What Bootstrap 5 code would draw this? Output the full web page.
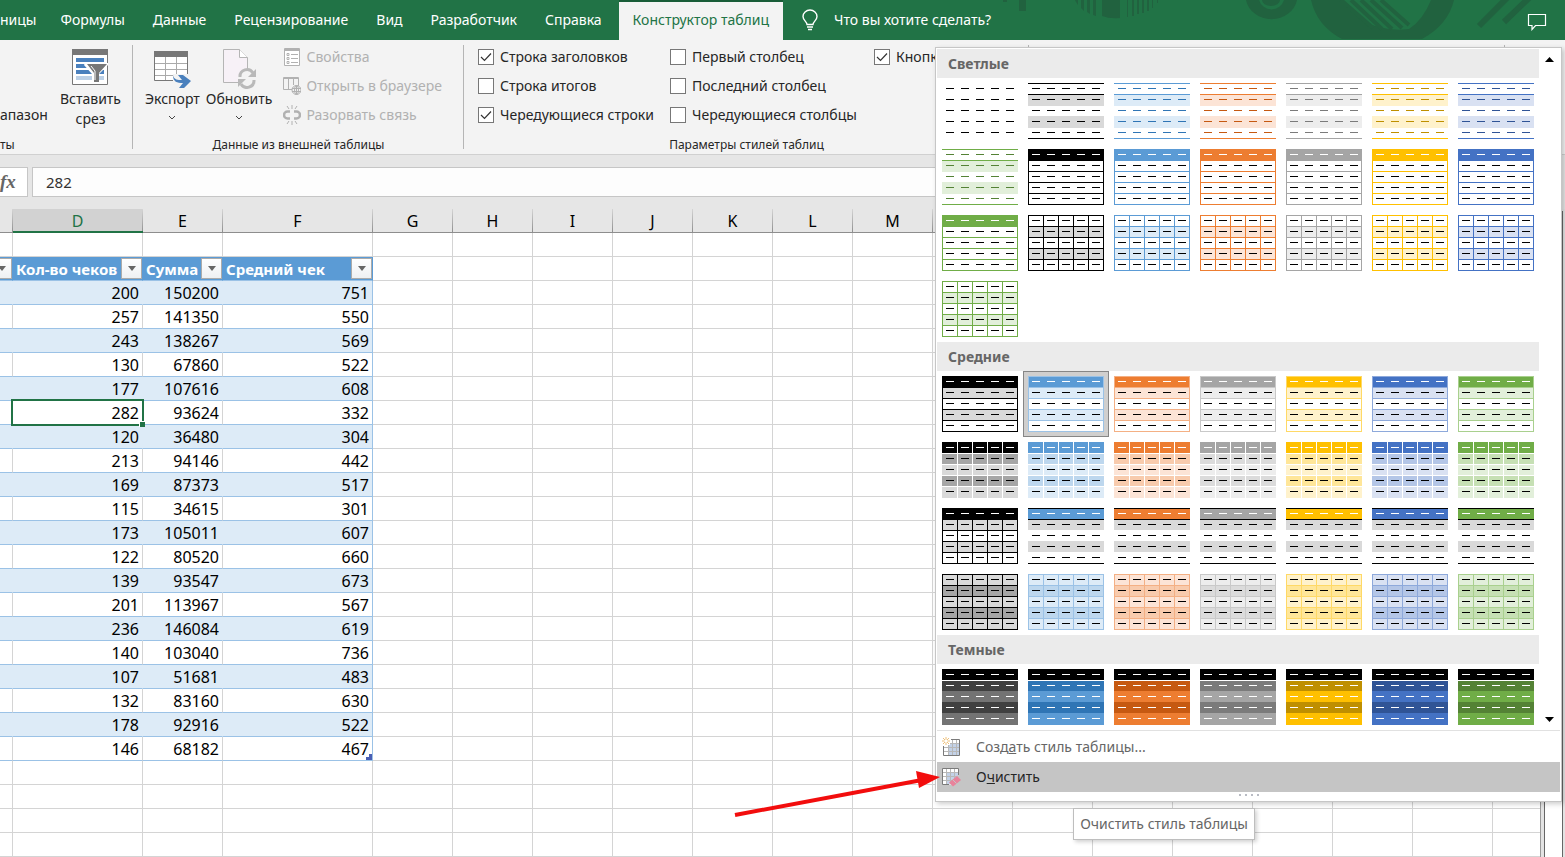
<!DOCTYPE html>
<html lang="ru">
<head>
<meta charset="utf-8">
<meta name="viewport" content="width=device-width, initial-scale=1">
<title>Конструктор таблиц</title>
<link href="https://cdn.jsdelivr.net/npm/bootstrap@5.3.0/dist/css/bootstrap.min.css" rel="stylesheet">
<style>
  body { font-family: "Noto Sans", "Open Sans", sans-serif; font-size: 14px; line-height: 20px; color: #262626; background: #e6e6e6; }
  button { color: inherit; }
  .app { min-height: 100vh; overflow: hidden; }

  /* Title tabs */
  .tabbar { height: 40px; background: #217346; color: #fff; }
  .tabbar .nav-link { color: #fff; padding: 10px 14px; line-height: 20px; border-radius: 0; white-space: nowrap; }
  .tabbar .nav-link.cut { padding: 10px 10px 10px 0; }
  .tabbar .nav-link.active { margin: 2px 3px 0; padding: 8px 14px 10px; background: #f3f3f3; color: #217346; box-shadow: 0 -2px #185c37; }
  .tabbar .deco { top: 0; right: 0; }
  .ask { gap: 16px; padding-left: 16px; white-space: nowrap; }
  .note { margin-right: 18px; }

  /* Ribbon */
  .ribbon { height: 115px; background: #f3f3f3; border-bottom: 1px solid #d0d0d0; }
  .group { padding-top: 5px; position: relative; flex: none; }
  .group::after { content: ""; position: absolute; right: 0; top: 5px; bottom: 5px; width: 1px; background: #b5b5b5; }
  .g-tools { width: 133px; } .g-data { width: 331px; } .g-opts { width: 565px; } .g-styles { width: 476px; }
  .group-name { font-size: 12px; line-height: 16px; color: #262626; height: 17px; white-space: nowrap; }
  .bigbtn { border: 0; background: none; padding: 2px 0 0; text-align: center; white-space: nowrap; }
  .bigbtn svg { display: block; margin: 0 auto; }
  .bigbtns { gap: 6px; padding-left: 12px; }
  .smallbtn { border: 0; background: none; padding: 0; height: 29px; gap: 5px; color: #b1b1b1; white-space: nowrap; }
  .smalls { padding-left: 11px; }
  .stack { margin-top: -3px; }
  .opt { height: 29px; gap: 6px; white-space: nowrap; }
  .opt .form-check-input { width: 16px; height: 16px; margin: 0; border: 1px solid #777; border-radius: 0; background-color: #fff; flex: none; }
  .opt .form-check-input:checked { background-color: #fff; border-color: #777; background-size: 16px 16px;
    background-image: url("data:image/svg+xml,%3csvg xmlns='http://www.w3.org/2000/svg' viewBox='0 0 16 16'%3e%3cpath d='M3 8l3.500 3.500L13 4.500' fill='none' stroke='%23333' stroke-width='1.200'/%3e%3c/svg%3e"); }
  .optgrid { display: grid; grid-template-columns: 192px 204px auto; padding-left: 14px; }

  /* Formula bar */
  .formula { padding: 12px 6px 12px 0; gap: 4px; }
  .fx { width: 28px; height: 30px; background: #fff; border: 1px solid #c6c6c6; border-left: 0; font: italic bold 19px/26px "Liberation Serif", serif; color: #666; padding: 0 15px 0 0; text-align: right; }
  .fbox { height: 30px; border: 1px solid #c6c6c6; border-radius: 0; padding: 0 13px; font-size: 15px; color: #333; background: #fdfdfd; }

  /* Sheet */
  .sheet { background: #fff; border-right: 1px solid #999; min-width: 0; }
  .grid { table-layout: fixed; width: 1573px; border-collapse: separate; border-spacing: 0; font-size: 16px; line-height: 20px; color: #000; }
  .grid td, .grid th { height: 24px; padding: 2px 3px 1px; border-right: 1px solid #d4d4d4; border-bottom: 1px solid #d4d4d4; text-align: right; white-space: nowrap; position: relative; }
  .grid thead th { background: #e6e6e6; border-image: linear-gradient(#d8d8d8, #8c8c8c) 1; text-align: center; font-weight: 400; }
  .grid thead th.cur { background: #d2d2d2; color: #217346; }
  .grid thead th.cur::after { content: ""; position: absolute; left: 0; right: -1px; bottom: -1px; height: 2px; background: #217346; }
  .grid .t { border-bottom-color: #9bc2e6; }
  .grid .last { border-right-color: #9bc2e6; }
  .grid .band .t { background: #ddebf7; border-right-color: #ddebf7; }
  .grid .band .last { border-right-color: #9bc2e6; }
  .grid .head .t { background: #5b9bd5; border-right-color: #5b9bd5; color: #fff; font-weight: 700; font-size: 15px; text-align: left; }
  .filter { position: absolute; right: 0; top: 1px; width: 21px; height: 21px; border: 1px solid #ababab; background: linear-gradient(#fff, #eef0f3); padding: 0; display: flex; align-items: center; justify-content: center; }
  .grid .sel { z-index: 1; }
  .sel::before { content: ""; position: absolute; left: -2px; top: -2px; right: -2px; bottom: -2px; border: 2px solid #217346; }
  .sel::after { content: ""; position: absolute; right: -3px; bottom: -3px; width: 6px; height: 6px; background: #217346; border: 1px solid #fff; border-width: 1px 0 0 1px; }
  .corner { position: absolute; right: 0; bottom: 0; }
  .rail { width: 24px; padding: 2px 2px 0 3px; background: #e3e3e3; }
  .thumb { background: #fff; border: 1px solid #666; border-bottom: 0; }

  /* Style gallery */
  .gallery { position: absolute; right: 3px; top: 47px; width: 627px; border: 1px solid #c6c6c6; padding: 1px; background: #fff; box-shadow: 2px 2px 5px rgba(0,0,0,.2); z-index: 5; }
  .cat { height: 29px; padding: 4px 11px; background: #ebebeb; color: #666; font-weight: 700; font-size: 14px; margin: 0; line-height: 21px; }
  .swatches { display: grid; grid-template-columns: repeat(7, 86px); }
  .swatch { border: 0; background: none; padding: 5px; height: 66px; }
  .swatch svg { display: block; shape-rendering: crispEdges; }
  .swatch.on { background: #d0cfce; outline: 1px solid #868686; outline-offset: -1px; }
  .bar { width: 21px; padding: 8px 0; }
  .bar button { border: 0; background: none; padding: 0; line-height: 0; }
  .cmd { border: 0; background: #fff; height: 31px; padding: 0 5px; gap: 15px; color: #666; text-align: left; }
  .cmd.hot { background: #c5c5c5; height: 30px; color: #262626; }
  .cmds { border-top: 1px solid #e1e1e1; }
  .grip { height: 8px; gap: 4px; padding-top: 2px; }
  .grip i { width: 2px; height: 2px; background: #b9bcc4; }
  .hint { position: absolute; right: 310px; top: 808px; border: 1px solid #bebebe; background: #fff; color: #666; padding: 5px 6px; line-height: 20px; box-shadow: 2px 2px 4px rgba(0,0,0,.18); z-index: 6; white-space: nowrap; }
  .pointer { position: absolute; right: 622px; top: 765px; z-index: 7; pointer-events: none; }
</style>
</head>
<body>
<div class="app position-relative d-flex flex-column">

  <header class="tabbar d-flex position-relative">
    <svg class="deco position-absolute" width="565" height="40" fill="#21623f" stroke="none" aria-hidden="true">
      <path d="M19 0h7v11h-7zM3 0h4v2h-4z"/>
      <path d="M75 0h3v5l-2-3zM81 0h3v11l-3-3zM87 0h3v14l-3-2zM93 0h3v16l-3-1zM102 0h18v18q-10 1-18-2zM127 0h1v17h-1zM132 0h2v16h-2zM137 0h2v14h-2zM142 0h2v13h-2zM147 0h2v11h-2zM152 0h1v8h-1zM157 0h1v3h-1z"/>
      <path d="M246 0a26 24 0 0 0 51 0h-13a13 13 0 0 1-25 0zM262 0h18a9 6 0 0 1-18 0z"/>
      <path d="M311 0q6 26 31 39h80q26-14 32-39h-23q-8 20-22 29q-26 3-45-8q-16-10-21-21z"/>
      <path d="M341 0l32 28M351 0l31 29M361 0l31 29M371 0l31 28M381 0l28 25" fill="none" stroke="#21623f" stroke-width="4"/>
      <path d="M479 26L507-2M504 22L530-3" fill="none" stroke="#21623f" stroke-width="6"/>
    </svg>
    <nav class="nav flex-nowrap position-relative">
      <a class="nav-link cut" href="#">ницы</a>
      <a class="nav-link" href="#">Формулы</a>
      <a class="nav-link" href="#">Данные</a>
      <a class="nav-link" href="#">Рецензирование</a>
      <a class="nav-link" href="#">Вид</a>
      <a class="nav-link" href="#">Разработчик</a>
      <a class="nav-link" href="#">Справка</a>
      <a class="nav-link active" href="#" aria-current="page">Конструктор таблиц</a>
    </nav>
    <div class="ask d-flex align-items-center position-relative">
      <svg width="16" height="22" fill="none" stroke="#fff" stroke-width="1.400"><path d="M5 15.500c0-3-4-4-4-8a7 6.500 0 0 1 14 0c0 4-4 5-4 8zM5 18h6M6 20.500h4"/></svg>
      <span>Что вы хотите сделать?</span>
    </div>
    <button class="note btn border-0 p-0 ms-auto position-relative" aria-label="Примечания"><svg width="20" height="18" fill="none" stroke="#fff" stroke-width="1.200"><path d="M1.500 1.500h17v11h-10l-3.500 4v-4h-3.500z"/></svg></button>
  </header>

  <section class="ribbon d-flex">
    <div class="group g-tools d-flex flex-column">
      <div class="d-flex flex-grow-1 justify-content-between pe-2">
        <button class="bigbtn align-self-end pb-2 mb-1">апазон</button>
        <button class="bigbtn align-self-start me-1">
          <svg width="36" height="42" viewBox="0 0 36 42"><path d="M.5 2.500h35v35H.5z" fill="#fff" stroke="#777"/><path d="M0 2h36v6H0z" fill="#777"/><path d="M4 11h28v4H4zM4 17h28v4H4zM4 23h28v4H4z" fill="#4a80bd"/><path d="M4 29h28v4H4z" fill="#bcd0e6"/><path d="M13 16h23v2l-9 9v9h-7v-9l-8-9z" fill="#fff"/><path d="M15 17h20l-8 9v9h-5v-9z" fill="#777"/><path d="M19 19l4 5v9" fill="none" stroke="#fff"/></svg>
          Вставить<br>срез
        </button>
      </div>
      <div class="group-name">ты</div>
    </div>

    <div class="group g-data d-flex flex-column">
      <div class="d-flex flex-grow-1">
        <div class="bigbtns d-flex">
          <button class="bigbtn align-self-start">
            <svg width="38" height="42" viewBox="0 0 38 42"><path d="M1.500 4.500h33v29h-33z" fill="#fff" stroke="#777"/><path d="M1 4h34v6H1z" fill="#777"/><path d="M2 16.500h32M2 22.500h32M2 28.500h32M12.500 10v23M23.500 10v23" stroke="#aaa" fill="none"/><path d="M20 27h18v13H20z" fill="#f3f3f3"/><path d="M20 28c1 5 5 5 9 5l-4-5h5l8 6-7 7h-5l4-5c-6 0-10-1-10-8z" fill="#4a80bd"/></svg>
            Экспорт<br><svg width="8" height="16" fill="none" stroke="#444"><path d="M1 7l3 3 3-3"/></svg>
          </button>
          <button class="bigbtn align-self-start">
            <svg width="34" height="42" viewBox="0 0 34 42"><path d="M1.500 2.500h16l8 8v25h-24z" fill="#f7f1f7" stroke="#b5b5b5"/><path d="M17.500 2.500v8h8" fill="#fff" stroke="#b5b5b5"/><circle cx="25" cy="31" r="9" fill="#f3f3f3"/><path d="M18 30a7 7 0 0 1 13-4M32 33a7 7 0 0 1-13 4" fill="none" stroke="#b9b9b9" stroke-width="3"/><path d="M34 22v8h-8zM16 40v-8h8z" fill="#b9b9b9"/></svg>
            Обновить<br><svg width="8" height="16" fill="none" stroke="#444"><path d="M1 7l3 3 3-3"/></svg>
          </button>
        </div>
        <div class="stack smalls d-flex flex-column align-items-start">
          <button class="smallbtn d-flex align-items-center" disabled>
            <svg width="18" height="18" fill="none" stroke="#b1b1b1"><path d="M1.500.5h15v17h-15z" fill="#fff"/><path d="M1 1.500h16M1 2.500h16M8 6.500h7M8 10.500h7M8 14.500h7"/><path d="M4 5.500h2v2H4zM4 9.500h2v2H4zM4 13.500h2v2H4z"/></svg>Свойства</button>
          <button class="smallbtn d-flex align-items-center" disabled>
            <svg width="18" height="18" viewBox="0 0 18 18" fill="none" stroke="#b1b1b1"><path d="M.5.500h15v12H.5z"/><path d="M0 1.500h16M5.500 2v10M10.500 2v6"/><circle cx="13.500" cy="13" r="4.500" fill="#f3f3f3"/><path d="M9 11.500h9M9 14.500h9M13.500 9v8"/><ellipse cx="13.500" cy="13" rx="2" ry="4.500"/></svg>Открыть в браузере</button>
          <button class="smallbtn d-flex align-items-center" disabled>
            <svg width="18" height="20" viewBox="0 0 18 20" fill="none" stroke="#b1b1b1"><path d="M7 6.500H4.500a3.500 3.500 0 0 0 0 7H7M11 6.500h2.500a3.500 3.500 0 0 1 0 7H11" stroke-width="2.500"/><path d="M9 0v4M4 1l2 3M14 1l-2 3M9 16v4M4 19l2-3M14 19l-2-3"/></svg>Разорвать связь</button>
        </div>
      </div>
      <div class="group-name text-center">Данные из внешней таблицы</div>
    </div>

    <div class="group g-opts d-flex flex-column">
      <div class="optgrid stack flex-grow-1">
        <div>
          <label class="opt d-flex align-items-center"><input class="form-check-input" type="checkbox" checked>Строка заголовков</label>
          <label class="opt d-flex align-items-center"><input class="form-check-input" type="checkbox">Строка итогов</label>
          <label class="opt d-flex align-items-center"><input class="form-check-input" type="checkbox" checked>Чередующиеся строки</label>
        </div>
        <div>
          <label class="opt d-flex align-items-center"><input class="form-check-input" type="checkbox">Первый столбец</label>
          <label class="opt d-flex align-items-center"><input class="form-check-input" type="checkbox">Последний столбец</label>
          <label class="opt d-flex align-items-center"><input class="form-check-input" type="checkbox">Чередующиеся столбцы</label>
        </div>
        <div>
          <label class="opt d-flex align-items-center"><input class="form-check-input" type="checkbox" checked>Кнопка</label>
        </div>
      </div>
      <div class="group-name text-center">Параметры стилей таблиц</div>
    </div>
    <div class="group g-styles"></div>
  </section>

  <div class="formula d-flex">
    <button class="fx" aria-label="Вставить функцию">fx</button>
    <input class="fbox form-control flex-grow-1 w-auto" value="282" aria-label="Строка формул">
  </div>

  <main class="d-flex flex-grow-1">
    <div class="sheet flex-grow-1 overflow-hidden">
      <table class="grid">
        <colgroup id="cols"></colgroup>
        <thead><tr id="letters"></tr></thead>
        <tbody id="cells"></tbody>
      </table>
    </div>
    <div class="rail d-flex flex-column"><div class="thumb flex-grow-1"></div></div>
  </main>

  <aside class="gallery">
    <div class="d-flex">
      <div id="cats"></div>
      <div class="bar d-flex flex-column justify-content-between align-items-center">
        <button aria-label="Вверх"><svg width="9" height="5"><path d="M0 5h9L4.500 0z"/></svg></button>
        <button aria-label="Вниз"><svg width="9" height="5"><path d="M0 0h9L4.500 5z"/></svg></button>
      </div>
    </div>
    <div class="cmds">
      <button class="cmd d-flex align-items-center w-100">
        <svg width="19" height="20" viewBox="0 0 19 20" fill="none"><path d="M2 3h16v15H2z" fill="#fff"/><path d="M6 7h12v11H6z" fill="#c3d2e8"/><path d="M6.500 3v15M10.500 3v15M14.500 3v15M2 6.500h16M2 10.500h16M2 14.500h16" stroke="#b8b8b8"/><path d="M1.500 9v9.500h16v-16H9" stroke="#7a7a7a"/><path d="M-1-1h9v9h-9z" fill="#fff"/><path d="M4 0v8M0 4h8M1 1l6 6M7 1L1 7" stroke="#eec07b"/><circle cx="4" cy="4" r="1.500" fill="#fff"/></svg>
        <span>Созд<u>а</u>ть стиль таблицы...</span>
      </button>
      <button class="cmd hot d-flex align-items-center w-100">
        <svg width="19" height="20" viewBox="0 0 19 20" fill="none"><path d="M.5 1.500h16v16H.5z" fill="#fff"/><path d="M5 5h12v12H5z" fill="#c3d2e8"/><path d="M4.500 2v15M8.500 2v15M12.500 2v15M1 5.500h15M1 9.500h15M1 13.500h15" stroke="#b8b8b8"/><path d="M16.500 8V1.500H.5v16H7" stroke="#7a7a7a"/><path d="M15 8.500h4v11H8z" fill="#c5c5c5"/><path d="M15 9l4 4-8 6.500-4-4z" fill="#e8839b"/><path d="M10.500 12.500l4 4" stroke="#c5c5c5"/></svg>
        <span>О<u>ч</u>истить</span>
      </button>
      <div class="grip d-flex justify-content-center"><i></i><i></i><i></i><i></i></div>
    </div>
  </aside>
  <div class="hint" role="tooltip">Очистить стиль таблицы</div>
  <svg class="pointer" width="209" height="54" viewBox="0 0 209 54" aria-hidden="true"><path d="M1 50L188 15" stroke="#f20d0d" stroke-width="4" fill="none"/><path d="M206 12L182 6l3 17z" fill="#f20d0d"/></svg>
</div>

<script>
  /* Worksheet */
  const widths = [13, 130, 80, 150].concat(Array(15).fill(80));
  const letters = ['', 'D', 'E', 'F', 'G', 'H', 'I', 'J', 'K', 'L', 'M'];
  const data = [[200,150200,751],[257,141350,550],[243,138267,569],[130,67860,522],[177,107616,608],[282,93624,332],[120,36480,304],[213,94146,442],[169,87373,517],[115,34615,301],[173,105011,607],[122,80520,660],[139,93547,673],[201,113967,567],[236,146084,619],[140,103040,736],[107,51681,483],[132,83160,630],[178,92916,522],[146,68182,467]];
  document.getElementById('cols').innerHTML = widths.map(w => `<col style="width:${w}px">`).join('');
  document.getElementById('letters').innerHTML = widths.map((w, i) => `<th${i === 1 ? ' class="cur"' : ''}>${letters[i] || ''}</th>`).join('');
  const rest = '<td></td>'.repeat(15);
  const drop = '<button class="filter" aria-label="Фильтр"><svg width="8" height="5"><path d="M0 0h8L4 5z" fill="#666"/></svg></button>';
  let rows = `<tr><td></td><td></td><td></td><td></td>${rest}</tr>`;
  rows += `<tr class="head"><td class="t">${drop}</td>` + ['Кол-во чеков', 'Сумма', 'Средний чек'].map((h, i) => `<td class="t${i === 2 ? ' last' : ''}">${h}${drop}</td>`).join('') + rest + '</tr>';
  data.forEach((r, n) => {
    const end = n === data.length - 1 ? '<svg class="corner" width="6" height="6"><path d="M3 0h3v6H0V3h3z" fill="#4a5fb4"/></svg>' : '';
    rows += `<tr class="${n % 2 ? '' : 'band'}"><td class="t"></td><td class="t${n === 5 ? ' sel' : ''}">${r[0]}</td><td class="t">${r[1]}</td><td class="t last">${r[2]}${end}</td>${rest}</tr>`;
  });
  for (let i = 0; i < 4; i++) rows += `<tr>${'<td></td>'.repeat(19)}</tr>`;
  document.getElementById('cells').innerHTML = rows;

  /* Gallery: base, 20% tint, 40% tint, 60% tint, shade */
  const pal = [
    ['#000', '#d9d9d9', '#a6a6a6', '#000', '#404040'],
    ['#5b9bd5', '#ddebf7', '#bdd7ee', '#9bc2e6', '#2f75b5'],
    ['#ed7d31', '#fce4d6', '#f8cbad', '#f4b084', '#c65911'],
    ['#a5a5a5', '#ededed', '#dbdbdb', '#c9c9c9', '#7b7b7b'],
    ['#ffc000', '#fff2cc', '#ffe699', '#ffd966', '#bf8f00'],
    ['#4472c4', '#d9e1f2', '#b4c6e7', '#8ea9db', '#305496'],
    ['#70ad47', '#e2efda', '#c6e0b4', '#a9d08e', '#548235']
  ];
  const ys = [0, 11, 22, 33, 44, 55], xs = [0, 15, 30, 45, 60, 75];
  const box = (x, y, w, h, c) => c ? `<path d="M${x} ${y}h${w}v${h}h-${w}z" fill="${c}"/>` : '';
  const hl = (list, c) => list.map(y => box(0, y, 76, 1, c)).join('');
  const vl = (list, c, top = 0) => list.map(x => box(x, top, 1, 56 - top, c)).join('');
  const fills = f => f.map((c, i) => box(0, ys[i], 76, i === 4 ? 12 : 11 + (i % 2), c)).join('');
  const dashes = (head, body) => ys.slice(0, 5).map((y, r) => xs.slice(0, 5).map(x => box(x + 4, y + 5, 8, 1, r ? body : head)).join('')).join('');
  const kinds = {
    none: () => dashes('#000', '#000'),
    l1: p => fills([0, p[1], 0, p[1], 0]) + hl([0, 11, 55], p[0]) + dashes(p === pal[0] ? '#000' : p[4], p === pal[0] ? '#000' : p[4]),
    l2: p => fills([p[0], '#fff', '#fff', '#fff', '#fff']) + hl(ys, p[0]) + vl([0, 75], p[0]) + dashes('#fff', '#000'),
    l3: p => fills(['#fff', p[1], '#fff', p[1], '#fff']) + hl(ys, p[0]) + vl(xs, p[0]) + dashes('#000', '#000'),
    m1: p => fills([p[0], p[1], '#fff', p[1], '#fff']) + hl(ys, p[3]) + vl([0, 75], p[3]) + dashes('#fff', '#000'),
    m2: p => fills([p[0], p[2], p[1], p[2], p[1]]) + hl([11, 22, 33, 44], '#fff') + vl([15, 30, 45, 60], '#fff') + dashes('#fff', '#000'),
    m3: p => fills([p[0], '#d9d9d9', '#fff', '#d9d9d9', '#fff']) + (p === pal[0] ? hl(ys, '#000') + vl(xs, '#000') : hl([0, 11, 55], '#000')) + dashes('#fff', '#000'),
    m4: p => fills([p[1], p[2], p[1], p[2], p[1]]) + hl(ys, p[3]) + vl(xs, p[3]) + dashes('#000', '#000'),
    d1: p => { const m = p === pal[0] ? '#737373' : p[0]; return fills(['#000', p[4], m, p[4], m]) + hl([11], '#fff') + dashes('#fff', '#fff'); }
  };
  const all = k => pal.map(p => [k, p]);
  const cats = [
    ['Светлые', [['none', 0], ...all('l1'), ...all('l2'), ...all('l3')]],
    ['Средние', [...all('m1'), ...all('m2'), ...all('m3'), ...all('m4')]],
    ['Темные', all('d1')]
  ];
  document.getElementById('cats').innerHTML = cats.map(([name, list]) =>
    `<h2 class="cat">${name}</h2><div class="swatches">` +
    list.map(([k, p], i) => `<button class="swatch${k === 'm1' && i === 1 ? ' on' : ''}" aria-label="${name} ${i + 1}"><svg width="76" height="56">${kinds[k](p)}</svg></button>`).join('') + '</div>').join('');
</script>
<script src="https://cdn.jsdelivr.net/npm/bootstrap@5.3.0/dist/js/bootstrap.bundle.min.js"></script>
</body>
</html>
